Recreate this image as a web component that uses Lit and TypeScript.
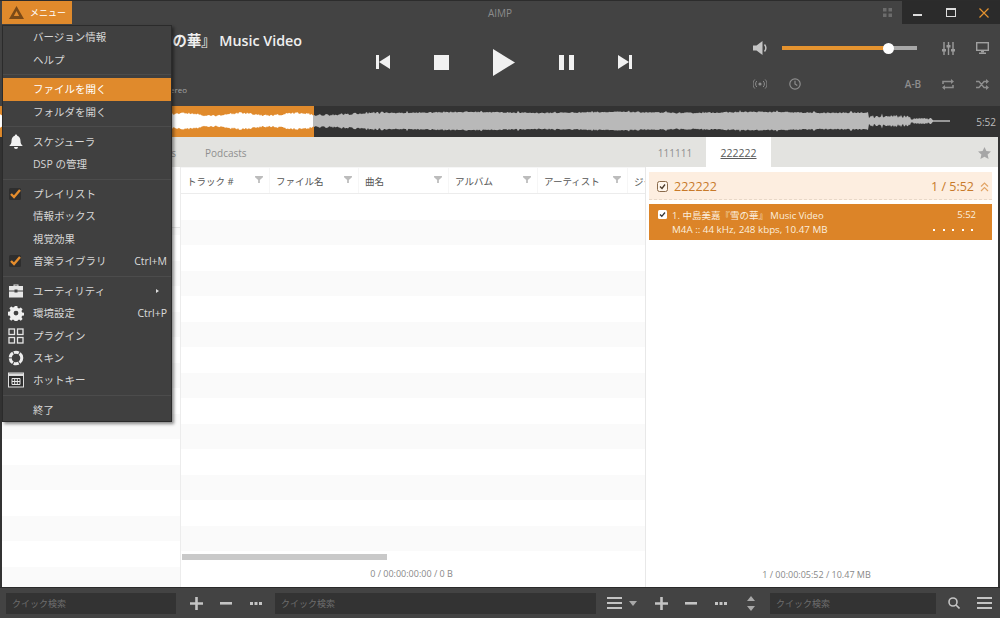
import { LitElement, html, css, svg } from "lit";
import { customElement } from "lit/decorators.js";

function wavePath(): { played: string; rest: string } {
  let seed = 12345;
  const rnd = () => {
    seed = (seed * 16807) % 2147483647;
    return seed / 2147483647;
  };
  const amps: number[] = [];
  for (let x = 0; x < 951; x++) {
    let a = 8 + Math.sin(x / 23) * 0.5 + rnd() * 1.2;
    if (x % 37 === 0) a += 1.5;
    if (x < 314) a = 5.5 + Math.sin(x / 9) * 1.2 + rnd() * 2.2;
    else if (x < 385) a = 4.5 + ((x - 314) / 70) * 3 + rnd() * 2.2;
    if (x > 868) a = 3 + rnd() * 3 * (x % 9 === 0 ? 1.8 : 1);
    if (x > 910) a = 1.5 + rnd() * 2;
    if (x > 932) a = 0.8;
    amps.push(a);
  }
  const build = (s: number, e: number) => {
    let up = `M${s} 15`;
    let down = "";
    for (let x = s; x <= e; x++) {
      up += `L${x} ${(15 - amps[x]).toFixed(1)}`;
      down = `L${x} ${(15 + amps[x]).toFixed(1)}` + down;
    }
    return up + down + "Z";
  };
  return { played: build(0, 313), rest: build(313, 950) };
}

const WAVE = wavePath();

const filterIcon = html`<svg class="filter" width="8" height="7" viewBox="0 0 9 8"><path d="M0 0h9v1.500L5.500 4.500V8h-2V4.500L0 1.500z" fill="#bcbcbc"/></svg>`;

const checkBox = html`<svg width="14" height="14" viewBox="0 0 14 14"><rect x="1" y="1" width="12" height="12" rx="1.500" fill="#2e2e2e"/><path d="M3 7l3 3 6-7" fill="none" stroke="#e58d2d" stroke-width="2.400"/></svg>`;

const menuIcons: Record<string, unknown> = {
  bell: html`<svg width="16" height="16" viewBox="0 0 16 16"><path d="M8 0.500a1.200 1.200 0 0 1 1.200 1.300C11.500 2.500 12.500 4.500 12.500 7c0 2.500 1 3.500 2.300 5H1.200c1.300-1.500 2.300-2.500 2.300-5 0-2.500 1-4.500 3.300-5.200A1.200 1.200 0 0 1 8 .5z" fill="#f2f2f2"/><path d="M6 13h4a2 2 0 0 1-4 0z" fill="#f2f2f2"/></svg>`,
  check: checkBox,
  tool: html`<svg width="16" height="16" viewBox="0 0 16 16"><path d="M5.500 3V1.500h5V3h-1V2.500h-3V3z" fill="#e6e6e6"/><rect x="1" y="3" width="14" height="4.500" fill="#e6e6e6"/><rect x="1" y="8.500" width="14" height="6" fill="#e6e6e6"/><rect x="6.500" y="6.500" width="3" height="3" fill="#404040"/></svg>`,
  gear: html`<svg width="16" height="16" viewBox="0 0 16 16"><path fill="#efefef" fill-rule="evenodd" d="M6.700 1h2.600l.4 2 1.400.6 1.700-1.100 1.800 1.800-1.100 1.700.6 1.400 2 .4v2.600l-2 .4-.6 1.400 1.100 1.700-1.800 1.800-1.700-1.100-1.400.6-.4 2H6.700l-.4-2-1.400-.6-1.700 1.100-1.800-1.800 1.100-1.700-.6-1.400-2-.4V6.800l2-.4.6-1.400-1.100-1.700 1.800-1.800 1.700 1.100 1.400-.6zM8 5.700a2.400 2.400 0 1 0 0 4.800 2.400 2.400 0 0 0 0-4.800z"/></svg>`,
  plug: html`<svg width="16" height="16" viewBox="0 0 16 16" fill="none" stroke="#e6e6e6" stroke-width="1.300"><rect x="1" y="1" width="5.500" height="5.500"/><rect x="9.500" y="1" width="5.500" height="5.500"/><rect x="1" y="9.500" width="5.500" height="5.500"/><rect x="9.500" y="9.500" width="5.500" height="5.500"/></svg>`,
  skin: html`<svg width="16" height="16" viewBox="0 0 16 16"><circle cx="8" cy="8" r="5.800" fill="none" stroke="#ededed" stroke-width="3" stroke-dasharray="5.200 .9"/></svg>`,
  key: html`<svg width="16" height="16" viewBox="0 0 16 16"><rect x=".5" y="1" width="15" height="14" fill="#2e2e2e" stroke="#dedede"/><rect x="1" y="1.500" width="14" height="2.500" fill="#dedede"/><path d="M4 6.500h8v6H4zM6.700 6.500v6M9.300 6.500v6M4 9.500h8" fill="none" stroke="#e6e6e6"/></svg>`,
};

type Item = { t?: string; icon?: string; key?: string; sub?: boolean; on?: boolean; sep?: boolean };
const MENU: Item[] = [
  { t: "バージョン情報" },
  { t: "ヘルプ" },
  { sep: true },
  { t: "ファイルを開く", on: true },
  { t: "フォルダを開く" },
  { sep: true },
  { t: "スケジューラ", icon: "bell" },
  { t: "DSP の管理" },
  { sep: true },
  { t: "プレイリスト", icon: "check" },
  { t: "情報ボックス" },
  { t: "視覚効果" },
  { t: "音楽ライブラリ", icon: "check", key: "Ctrl+M" },
  { sep: true },
  { t: "ユーティリティ", icon: "tool", sub: true },
  { t: "環境設定", icon: "gear", key: "Ctrl+P" },
  { t: "プラグイン", icon: "plug" },
  { t: "スキン", icon: "skin" },
  { t: "ホットキー", icon: "key" },
  { sep: true },
  { t: "終了" },
];

const COLS = [
  ["トラック #", 88],
  ["ファイル名", 88],
  ["曲名", 89],
  ["アルバム", 88],
  ["アーティスト", 89],
  ["ジャンル", 40],
] as [string, number][];

const plus = html`<svg width="13" height="13" viewBox="0 0 13 13"><path d="M5.200 0h2.600v5.200H13v2.600H7.800V13H5.200V7.800H0V5.200h5.200z" fill="#c4c4c4"/></svg>`;
const minus = html`<svg width="12" height="3" viewBox="0 0 12 3"><rect width="12" height="2.600" fill="#c4c4c4"/></svg>`;
const dots = html`<svg width="12" height="3" viewBox="0 0 12 3" fill="#c4c4c4"><rect width="3" height="3"/><rect x="4.500" width="3" height="3"/><rect x="9" width="3" height="3"/></svg>`;
const burger = html`<svg width="15" height="12" viewBox="0 0 15 12" fill="#c4c4c4"><rect width="15" height="2"/><rect y="5" width="15" height="2"/><rect y="10" width="15" height="2"/></svg>`;

@customElement("app-root")
export class AppRoot extends LitElement {
  static styles = css`
    :host {
      display: block;
      width: 1000px;
      height: 618px;
      overflow: hidden;
      font-family: "Open Sans", "Noto Sans CJK JP", sans-serif;
    }
    .app {
      position: relative;
      width: 1000px;
      height: 618px;
      display: flex;
      flex-direction: column;
      background: #333;
    }
    .top {
      height: 106px;
      flex: none;
      background: #434343;
      border-top: 1px solid #2c2c2c;
      box-sizing: border-box;
      display: flex;
      flex-direction: column;
    }
    .titlebar {
      height: 23px;
      flex: none;
      display: flex;
      align-items: stretch;
    }
    .logo-btn {
      margin-left: 2px;
      width: 70px;
      background: #e08a2c;
      display: flex;
      align-items: center;
      gap: 6px;
      padding-left: 7px;
      box-sizing: border-box;
      color: #fff;
      font-size: 9px;
    }
    .win-title {
      flex: 1;
      text-align: center;
      color: #8c8c8c;
      font-size: 10px;
      line-height: 24px;
      padding-left: 56px;
    }
    .layout-ic {
      width: 30px;
      display: flex;
      align-items: center;
      justify-content: flex-start;
      padding-left: 11px;
      box-sizing: border-box;
    }
    .win {
      width: 98px;
      background: #2b2b2b;
      display: grid;
      grid-template-columns: 32px 33px 33px;
      align-items: center;
      justify-items: center;
    }
    .main {
      flex: 1;
      display: flex;
      min-height: 0;
    }
    .info {
      width: 376px;
      flex: none;
      box-sizing: border-box;
      padding: 8px 0 10px 0;
      display: flex;
      flex-direction: column;
      justify-content: space-between;
      align-items: flex-end;
    }
    .song {
      width: 302px;
      text-align: right;
      margin-right: 74px;
      color: #efefef;
      font-size: 14.300px;
      font-weight: 600;
      line-height: 18px;
      white-space: nowrap;
    }
    .meta {
      width: 187px;
      margin-right: 189px;
      text-align: right;
      color: #a4a4a4;
      font-size: 8px;
      line-height: 12px;
      white-space: nowrap;
    }
    .transport {
      width: 256px;
      flex: none;
      height: 76px;
      display: flex;
      align-items: center;
      gap: 44px;
    }
    .spacer {
      width: 110px;
      flex: none;
    }
    .ctrl {
      display: grid;
      grid-template-columns: 36px 34px 84px 34px 36px 32px;
      grid-template-rows: 36px 36px;
      padding-top: 6px;
      align-items: center;
      justify-items: center;
    }
    .slider {
      grid-column: span 3;
      justify-self: start;
      margin-left: 4px;
      width: 135px;
      height: 4px;
      background: #a8a8a8;
      position: relative;
      display: flex;
    }
    .fill {
      height: 4px;
      background: #e5932f;
    }
    .knob {
      position: absolute;
      top: -3.500px;
      left: 101px;
      width: 11px;
      height: 11px;
      border-radius: 50%;
      background: #fff;
    }
    .ab {
      font-size: 10px;
      color: #8e8e8e;
      font-weight: 600;
    }
    .wave {
      height: 31px;
      flex: none;
      background: #333;
      display: flex;
      align-items: center;
    }
    .wave svg {
      display: block;
      flex: none;
    }
    .wave .time {
      flex: 1;
      text-align: right;
      padding-right: 4px;
      color: #bdbdbd;
      font-size: 10px;
    }
    .tabs {
      height: 30px;
      flex: none;
      margin: 0 2px;
      background: #e3e3e0;
      display: flex;
      align-items: stretch;
      font-size: 10px;
      color: #8f8f8f;
    }
    .tab {
      display: flex;
      align-items: center;
      justify-content: center;
      padding-top: 2px;
      box-sizing: border-box;
    }
    .tab.left {
      width: 174px;
      justify-content: flex-end;
    }
    .tab.pod {
      margin-left: 29px;
    }
    .tab.one {
      width: 60px;
      padding-right: 2px;
    }
    .tab.active {
      width: 65px;
      background: #fff;
      color: #5a5a5a;
      text-decoration: underline;
      font-size: 10.500px;
    }
    .tab-gap {
      flex: 1;
    }
    .tab-gap.fixed {
      flex: none;
      width: 203px;
    }
    .star {
      width: 24px;
      display: flex;
      align-items: center;
      justify-content: flex-start;
      padding-left: 4px;
      padding-top: 2px;
      box-sizing: border-box;
    }
    .content {
      flex: 1;
      min-height: 0;
      margin: 0 2px;
      display: flex;
      background: #fff;
    }
    .p-left {
      width: 179px;
      flex: none;
      border-right: 1px solid #ececec;
      display: flex;
      flex-direction: column;
      box-sizing: border-box;
    }
    .p-left .head {
      height: 61px;
      flex: none;
      border-bottom: 1px solid #e6e6e6;
      box-sizing: border-box;
    }
    .stripes {
      flex: 1;
      min-height: 0;
      background: repeating-linear-gradient(to bottom, #fff 0 26px, #fafafa 26px 51px);
    }
    .p-left .stripes {
      background-position: 0 7px;
      background-size: 100% 51px;
      background-image: linear-gradient(to bottom, #fff 0 26px, #fafafa 26px 51px);
      background-repeat: repeat-y;
    }
    .p-mid {
      width: 465px;
      flex: none;
      border-right: 1px solid #e8e8e8;
      display: flex;
      flex-direction: column;
      overflow: hidden;
      box-sizing: border-box;
    }
    .cols {
      height: 27px;
      flex: none;
      display: flex;
      background: #f6f6f6;
      border-bottom: 1px solid #ececec;
      box-sizing: border-box;
      padding-top: 1px;
      gap: 1px;
    }
    .col {
      flex: none;
      background: #fff;
      box-sizing: border-box;
      padding: 0 6px 0 6px;
      display: flex;
      align-items: center;
      justify-content: space-between;
      font-size: 9.500px;
      color: #555;
      white-space: nowrap;
      overflow: hidden;
    }
    .filter {
      flex: none;
      margin-bottom: 2px;
    }
    .hscroll {
      height: 6px;
      flex: none;
      width: 205px;
      background: #c9c9c9;
      margin: 1px 0 0 1px;
    }
    .status {
      height: 27px;
      flex: none;
      display: flex;
      align-items: center;
      justify-content: center;
      color: #888;
      font-size: 9px;
      padding-right: 3px;
      padding-bottom: 1px;
      box-sizing: border-box;
    }
    .p-right {
      flex: 1;
      min-width: 0;
      display: flex;
      flex-direction: column;
      padding: 5px 6px 0 3px;
    }
    .group {
      height: 28px;
      flex: none;
      background: #fdeee0;
      border-bottom: 1px dashed #e8d8c8;
      box-sizing: border-box;
      display: flex;
      align-items: center;
      padding: 2px 3px 0 8px;
      color: #c87a2a;
      font-size: 12.500px;
      gap: 6px;
    }
    .group .grow {
      flex: 1;
    }
    .track {
      margin-top: 4px;
      height: 36px;
      flex: none;
      background: #dc8428;
      display: grid;
      grid-template-columns: 23px 1fr auto;
      grid-template-rows: 1fr 1fr;
      align-items: center;
      box-sizing: border-box;
      padding: 3px 16px 3px 0;
      color: #fbeede;
      font-size: 9.500px;
    }
    .track .ck {
      justify-self: center;
      display: flex;
      padding-left: 4px;
    }
    .track .dur {
      justify-self: end;
    }
    .track .fmt {
      font-size: 9.800px;
    }
    .tdots {
      display: flex;
      gap: 7.500px;
      justify-self: end;
      padding-right: 3px;
    }
    .tdots i {
      width: 2px;
      height: 2px;
      background: #fff;
      display: block;
    }
    .grow-space {
      flex: 1;
    }
    .p-right .status {
      height: 25px;
      font-size: 9px;
      padding: 0;
      margin-right: 8px;
    }
    .bottom {
      height: 31px;
      flex: none;
      background: #434343;
      border-top: 1px solid #2a2a2a;
      box-sizing: border-box;
      display: flex;
      align-items: center;
    }
    .input {
      height: 21px;
      background: #333;
      color: #6e6e6e;
      font-size: 9px;
      display: flex;
      align-items: center;
      padding-left: 6px;
      box-sizing: border-box;
      flex: none;
    }
    .i1 {
      margin-left: 6px;
      width: 170px;
    }
    .i2 {
      width: 321px;
      margin-left: 4px;
    }
    .i3 {
      width: 166px;
      margin-left: 4px;
    }
    .cell {
      width: 30px;
      height: 21px;
      flex: none;
      display: flex;
      align-items: center;
      justify-content: center;
    }
    .first {
      margin-left: 5px;
    }
    .cell.list {
      width: 29px;
      margin-left: 4px;
    }
    .cell.drop {
      width: 17px;
      justify-content: flex-start;
    }
    .cell.search {
      width: 36px;
    }
    .cell.burger {
      width: 24px;
    }
    .menu {
      position: absolute;
      left: 2px;
      top: 25px;
      width: 170px;
      height: 397px;
      box-sizing: border-box;
      background: #404040;
      border: 1px solid #2b2b2b;
      box-shadow: 2px 2px 3px rgba(0, 0, 0, 0.45);
      color: #d6d6d6;
      font-size: 10.500px;
    }
    .mi {
      height: 22.350px;
      display: grid;
      grid-template-columns: 30px 1fr auto;
      align-items: center;
      padding-right: 4px;
    }
    .mi .lbl {
      padding-bottom: 1px;
    }
    .mi.on {
      background: #e08a2c;
      color: #fff;
    }
    .mi .ic {
      display: flex;
      justify-content: flex-start;
      padding-left: 5px;
    }
    .mi .key {
      font-size: 10.500px;
      color: #dcdcdc;
      padding-bottom: 1px;
    }
    .mi .sub {
      margin-right: 8px;
      width: 0;
      height: 0;
      border-left: 3px solid #ddd;
      border-top: 2.500px solid transparent;
      border-bottom: 2.500px solid transparent;
    }
    .msep {
      height: 7.600px;
      display: flex;
      align-items: center;
    }
    .msep::after {
      content: "";
      display: block;
      width: 100%;
      height: 1px;
      background: #4c4c4c;
    }
  `;

  render() {
    return html`
      <div class="app">
        <div class="top">
          <div class="titlebar">
            <div class="logo-btn">
              <svg width="15" height="13" viewBox="0 0 15 13"><path fill-rule="evenodd" d="M7.500 0L15 13H0zM7.500 5L4.800 10h5.400z" fill="#7a4a18"/></svg>
              <span>メニュー</span>
            </div>
            <div class="win-title">AIMP</div>
            <div class="layout-ic">
              <svg width="9" height="9" viewBox="0 0 9 9" fill="#6c6c6c"><rect width="3.500" height="3.500"/><rect x="5.500" width="3.500" height="3.500"/><rect y="5.500" width="3.500" height="3.500"/><rect x="5.500" y="5.500" width="3.500" height="3.500"/></svg>
            </div>
            <div class="win">
              <svg width="10" height="10" viewBox="0 0 10 10"><rect y="6" width="9" height="2" fill="#ddd"/></svg>
              <svg width="10" height="9" viewBox="0 0 10 9"><rect x=".5" y=".5" width="9" height="8" fill="none" stroke="#ddd"/><rect y="0" width="10" height="2" fill="#ddd"/></svg>
              <svg width="10" height="10" viewBox="0 0 10 10"><path d="M.5.5l9 9M9.500.5l-9 9" stroke="#e5932f" stroke-width="1.200"/></svg>
            </div>
          </div>
          <div class="main">
            <div class="info">
              <div class="song">1. 中島美嘉『雪の華』 Music Video</div>
              <div class="meta">M4A :: 44 kHz, 248 kbps, Stereo</div>
            </div>
            <div class="transport">
              <svg width="14" height="14" viewBox="0 0 14 14" fill="#f1f1f1"><rect width="3" height="14"/><path d="M14 0v14L3 7z"/></svg>
              <svg width="15" height="15" viewBox="0 0 15 15"><rect width="15" height="15" fill="#f1f1f1"/></svg>
              <svg width="22" height="27" viewBox="0 0 22 27"><path d="M0 0l22 13.500L0 27z" fill="#f1f1f1"/></svg>
              <svg width="15" height="15" viewBox="0 0 15 15" fill="#f1f1f1"><rect width="5" height="15"/><rect x="10" width="5" height="15"/></svg>
              <svg width="14" height="14" viewBox="0 0 14 14" fill="#f1f1f1"><rect x="11" width="3" height="14"/><path d="M0 0v14l11-7z"/></svg>
            </div>
            <div class="spacer"></div>
            <div class="ctrl">
              <svg width="15" height="14" viewBox="0 0 15 14"><path d="M0 4.500h3.500L9.500 0v14L3.500 9.500H0z" fill="#c4c4c4"/><path d="M11.500 3.500c1.600 2 1.600 5 0 7" fill="none" stroke="#c4c4c4" stroke-width="1.400"/></svg>
              <div class="slider">
                <div class="fill" style="width:106px"></div>
                <div class="knob"></div>
              </div>
              <svg width="13" height="13" viewBox="0 0 13 13" fill="#9c9c9c"><rect x="1.300" width="1.400" height="13"/><rect x="5.800" width="1.400" height="13"/><rect x="10.300" width="1.400" height="13"/><rect y="7" width="4" height="2.500"/><rect x="4.500" y="3" width="4" height="2.500"/><rect x="9" y="7" width="4" height="2.500"/></svg>
              <svg width="13" height="12" viewBox="0 0 13 12"><rect x=".7" y=".7" width="11.600" height="7.600" fill="none" stroke="#a0a0a0" stroke-width="1.400"/><rect x="5" y="8.500" width="3" height="2" fill="#a0a0a0"/><rect x="3" y="10.500" width="7" height="1.500" fill="#a0a0a0"/></svg>
              <svg width="14" height="10" viewBox="0 0 14 10" fill="none" stroke="#8e8e8e" stroke-width="1"><circle cx="7" cy="5" r="1.600" fill="#8e8e8e" stroke="none"/><path d="M3.800 2c-1.600 1.700-1.600 4.300 0 6M10.200 2c1.600 1.700 1.600 4.300 0 6M1.800.5c-2.400 2.700-2.400 6.300 0 9M12.200.5c2.400 2.700 2.400 6.300 0 9"/></svg>
              <svg width="12" height="12" viewBox="0 0 12 12" fill="none" stroke="#8e8e8e" stroke-width="1.200"><circle cx="6" cy="6" r="5.200"/><path d="M6 2.800V6l2.300 1.500"/></svg>
              <span></span>
              <span class="ab">A-B</span>
              <svg width="12" height="11" viewBox="0 0 12 11" fill="none" stroke="#8e8e8e" stroke-width="1.600"><path d="M1 5V2.500h8.500M1 8.500h10V6"/><path d="M9 0l3 2.500L9 5z" fill="#8e8e8e" stroke="none"/><path d="M3 6L0 8.500 3 11z" fill="#8e8e8e" stroke="none"/></svg>
              <svg width="13" height="11" viewBox="0 0 13 11" fill="none" stroke="#8e8e8e" stroke-width="1.400"><path d="M0 2.500h3l5 6h2.500M0 8.500h3l5-6h2.500"/><path d="M10 0l3 2.500L10 5zM10 6l3 2.500L10 11z" fill="#8e8e8e" stroke="none"/></svg>
            </div>
          </div>
        </div>

        <div class="wave">
          <svg width="952" height="31" viewBox="0 0 952 31">
            ${svg`<rect width="314" height="31" fill="#e08a2c"/><path d=${WAVE.played} fill="#fff"/><path d=${WAVE.rest} fill="#b9b9b9"/>`}
          </svg>
          <div class="time">5:52</div>
        </div>

        <div class="tabs">
          <div class="tab left">Playlists</div>
          <div class="tab pod">Podcasts</div>
          <div class="tab-gap"></div>
          <div class="tab one">111111</div>
          <div class="tab active">222222</div>
          <div class="tab-gap fixed"></div>
          <div class="star">
            <svg width="13" height="12" viewBox="0 0 13 12"><path d="M6.500 0l1.900 4.100 4.600.5-3.400 3 1 4.400-4.100-2.300L2.400 12l1-4.400L0 4.600l4.600-.5z" fill="#a6a6a6"/></svg>
          </div>
        </div>

        <div class="content">
          <div class="p-left">
            <div class="head"></div>
            <div class="stripes"></div>
          </div>
          <div class="p-mid">
            <div class="cols">
              ${COLS.map(([n, w], i) => html`<div class="col" style="width:${w}px"><span>${n}</span>${i < 5 ? filterIcon : ""}</div>`)}
            </div>
            <div class="stripes"></div>
            <div class="hscroll"></div>
            <div class="status">0 / 00:00:00:00 / 0 B</div>
          </div>
          <div class="p-right">
            <div class="group">
              <svg width="11" height="11" viewBox="0 0 11 11"><rect x=".5" y=".5" width="10" height="10" rx="2" fill="#fff6ec" stroke="#8a6a4a"/><path d="M3 5.500l2 2 3-4" fill="none" stroke="#4a3a2a" stroke-width="1.300"/></svg>
              <span>222222</span>
              <span class="grow"></span>
              <span>1 / 5:52</span>
              <svg width="9" height="10" viewBox="0 0 9 10" fill="none" stroke="#e2a566" stroke-width="1.200"><path d="M1 4.500l3.500-3.500L8 4.500M1 9l3.500-3.500L8 9"/></svg>
            </div>
            <div class="track">
              <span class="ck"><svg width="9" height="9" viewBox="0 0 9 9"><rect width="9" height="9" rx="1.500" fill="#fff"/><path d="M2 4.500l1.800 1.800L7 2.500" fill="none" stroke="#333" stroke-width="1.300"/></svg></span>
              <span>1. 中島美嘉『雪の華』 Music Video</span>
              <span class="dur">5:52</span>
              <span></span>
              <span class="fmt">M4A :: 44 kHz, 248 kbps, 10.47 MB</span>
              <span class="tdots"><i></i><i></i><i></i><i></i><i></i></span>
            </div>
            <div class="grow-space"></div>
            <div class="status">1 / 00:00:05:52 / 10.47 MB</div>
          </div>
        </div>

        <div class="bottom">
          <div class="input i1">クイック検索</div>
          <div class="cell first">${plus}</div>
          <div class="cell">${minus}</div>
          <div class="cell">${dots}</div>
          <div class="input i2">クイック検索</div>
          <div class="cell list">${burger}</div>
          <div class="cell drop"><svg width="8" height="5" viewBox="0 0 8 5"><path d="M0 0h8L4 5z" fill="#a8a8a8"/></svg></div>
          <div class="cell">${plus}</div>
          <div class="cell">${minus}</div>
          <div class="cell">${dots}</div>
          <div class="cell"><svg width="8" height="15" viewBox="0 0 8 15" fill="#a8a8a8"><path d="M4 0l4 5H0zM4 15l4-5H0z"/></svg></div>
          <div class="input i3">クイック検索</div>
          <div class="cell search"><svg width="12" height="12" viewBox="0 0 12 12" fill="none" stroke="#c4c4c4" stroke-width="1.600"><circle cx="5" cy="5" r="4"/><path d="M8 8l3.500 3.500"/></svg></div>
          <div class="cell burger">${burger}</div>
        </div>

        <div class="menu">
          ${MENU.map((m) =>
            m.sep
              ? html`<div class="msep"></div>`
              : html`<div class="mi ${m.on ? "on" : ""}">
                  <span class="ic">${m.icon ? menuIcons[m.icon] : ""}</span>
                  <span class="lbl">${m.t}</span>
                  ${m.key ? html`<span class="key">${m.key}</span>` : m.sub ? html`<span class="sub"></span>` : ""}
                </div>`
          )}
        </div>
      </div>
    `;
  }
}
